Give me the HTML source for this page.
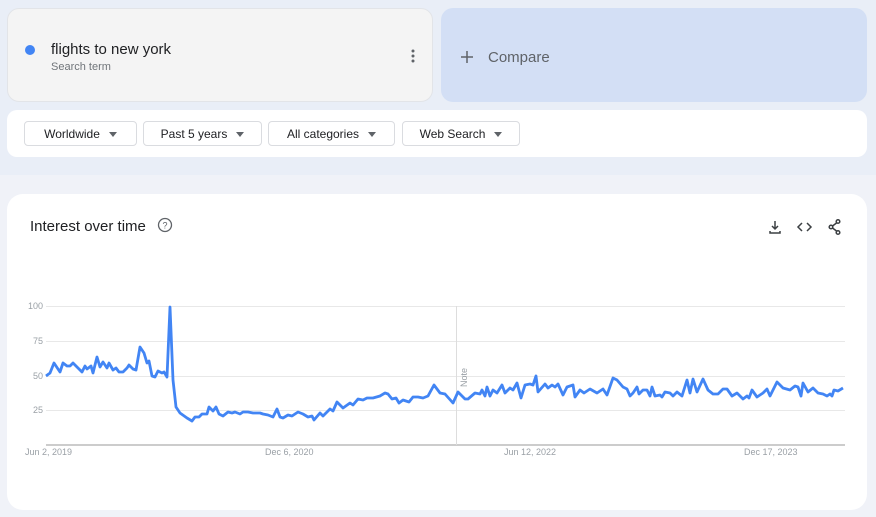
<!DOCTYPE html>
<html><head><style>
body{margin:0;width:876px;height:517px;background:#f0f2f8;font-family:"Liberation Sans",sans-serif;position:relative;overflow:hidden}
.top{position:absolute;left:0;top:0;width:876px;height:175px;background:#e9eef7}
.c1{position:absolute;left:7px;top:8px;width:426px;height:94px;background:#f4f4f4;border-radius:12px;border:1px solid #e2e4e8;box-sizing:border-box}
.c2{position:absolute;left:441px;top:8px;width:426px;height:94px;background:#d3dff5;border-radius:12px}
.bar{position:absolute;left:7px;top:110px;width:860px;height:47px;background:#fff;border-radius:10px}
.btn{position:absolute;top:11px;height:25px;border:1px solid #dadce0;border-radius:4px;box-sizing:border-box;font-size:12px;color:#202124;line-height:25px;text-align:center}
.btn i{display:inline-block;width:0;height:0;border-left:4px solid transparent;border-right:4px solid transparent;border-top:5px solid #5f6368;margin-left:9px;vertical-align:1px}
.card{position:absolute;left:7px;top:194px;width:860px;height:316px;background:#fff;border-radius:16px}
.lab{position:absolute;font-size:9px;color:#9aa0a6}
</style></head><body>
<div class="top"></div>
<div class="c1">
 <div style="position:absolute;left:17px;top:36px;width:10px;height:10px;border-radius:50%;background:#4285f4"></div>
 <div style="position:absolute;left:43px;top:32px;font-size:15px;color:#202124">flights to new york</div>
 <div style="position:absolute;left:43px;top:52px;font-size:11px;color:#70757a">Search term</div>
 <svg style="position:absolute;left:402px;top:40px" width="6" height="16"><circle cx="3" cy="2" r="1.5" fill="#5f6368"/><circle cx="3" cy="7" r="1.5" fill="#5f6368"/><circle cx="3" cy="12" r="1.5" fill="#5f6368"/></svg>
</div>
<div class="c2">
 <svg style="position:absolute;left:19px;top:42px" width="14" height="14"><path d="M7 1v12M1 7h12" stroke="#5f6368" stroke-width="1.5"/></svg>
 <div style="position:absolute;left:47px;top:41px;font-size:15px;color:#5f6368">Compare</div>
</div>
<div class="bar">
 <div class="btn" style="left:17px;width:113px">Worldwide<i></i></div>
 <div class="btn" style="left:136px;width:119px">Past 5 years<i></i></div>
 <div class="btn" style="left:261px;width:127px">All categories<i></i></div>
 <div class="btn" style="left:395px;width:118px">Web Search<i></i></div>
</div>
<div class="card">
 <div style="position:absolute;left:23px;top:24px;font-size:15px;color:#202124">Interest over time</div>
 <svg style="position:absolute;left:150px;top:23px" width="16" height="16" viewBox="0 0 16 16"><circle cx="8" cy="8" r="6.5" fill="none" stroke="#5f6368" stroke-width="1.3"/><text x="8" y="11.5" font-size="9" text-anchor="middle" fill="#5f6368" font-family="Liberation Sans">?</text></svg>
 <svg style="position:absolute;left:760px;top:24px" width="80" height="18" viewBox="0 0 80 18" fill="none" stroke="#3c4043" stroke-width="1.5">
  <path d="M8 3v8M5 8l3 3 3-3M3 13v2h10v-2"/>
  <path d="M35 5l-4 4 4 4M40 5l4 4-4 4"/>
  <circle cx="71" cy="3.5" r="1.8"/><circle cx="64" cy="9" r="1.8"/><circle cx="71" cy="14.5" r="1.8"/><path d="M65.5 8l4-3M65.5 10l4 3"/>
 </svg>
</div>
<svg style="position:absolute;left:0;top:0" width="876" height="517">
 <g stroke="#e8e8e8" stroke-width="1"><line x1="46" y1="306.5" x2="845" y2="306.5"/><line x1="46" y1="341.5" x2="845" y2="341.5"/><line x1="46" y1="376.5" x2="845" y2="376.5"/><line x1="46" y1="410.5" x2="845" y2="410.5"/></g>
 <line x1="46" y1="445" x2="845" y2="445" stroke="#ccc" stroke-width="2"/>
 <line x1="456.5" y1="306" x2="456.5" y2="445" stroke="#ddd"/>
 <text x="467" y="387" font-size="9" fill="#9aa0a6" transform="rotate(-90 467 387)" font-family="Liberation Sans">Note</text>
 <polyline fill="none" stroke="#4285f4" stroke-width="2.8" stroke-linejoin="round" points="46,376 50,373 54,363 60,372 63,363 67,366 70,366 73,363 82,372 85,366 87,369 91,366 93,373 97,357 100,367 103,362 107,368 109,363 113,370 116,368 119,372 123,372 127,368 129,365 133,369 136,370 140,347 144,353 147,363 149,361 152,376 155,377 158,371 162,373 164,372 167,377 170,307 173,380 176,407 180,413 187,418 192,421 195,417 199,417 202,414 207,414 209,407 213,411 216,407 219,414 223,416 228,412 232,413 235,412 240,414 243,412 248,412 253,413 260,413 263,414 268,415 273,417 277,409 280,417 283,418 288,415 292,416 298,412 303,414 308,417 312,416 314,420 320,413 323,416 330,409 333,411 337,402 343,408 350,403 353,405 358,399 363,400 367,398 373,398 380,396 385,393 388,394 392,399 396,398 399,403 403,400 409,402 413,397 418,397 423,398 428,396 434,385 440,393 445,394 453,403 458,392 465,399 468,399 475,393 480,394 482,390 485,396 487,387 490,396 493,390 497,393 502,385 505,393 510,388 513,390 517,383 521,398 525,385 530,384 533,385 536,376 538,392 545,384 548,388 552,385 555,387 558,384 563,395 567,387 573,385 575,397 580,390 584,393 590,389 597,393 603,389 607,395 613,378 617,380 623,387 627,389 630,396 633,393 637,387 639,394 643,390 647,390 650,396 652,387 655,396 660,395 662,397 665,392 670,393 673,396 677,392 682,396 687,380 690,393 693,379 697,392 703,379 708,390 713,394 718,394 723,389 727,389 732,396 737,393 743,399 747,396 749,398 752,390 757,397 763,393 767,389 770,396 777,382 783,388 790,390 795,386 798,387 801,396 803,383 808,392 813,388 818,393 823,394 827,396 830,394 832,396 834,390 838,391 843,388"/>
</svg>
<div class="lab" style="left:28px;top:301px">100</div>
<div class="lab" style="left:33px;top:336px">75</div>
<div class="lab" style="left:33px;top:371px">50</div>
<div class="lab" style="left:33px;top:405px">25</div>
<div class="lab" style="left:25px;top:447px">Jun 2, 2019</div>
<div class="lab" style="left:265px;top:447px">Dec 6, 2020</div>
<div class="lab" style="left:504px;top:447px">Jun 12, 2022</div>
<div class="lab" style="left:744px;top:447px">Dec 17, 2023</div>
</body></html>
